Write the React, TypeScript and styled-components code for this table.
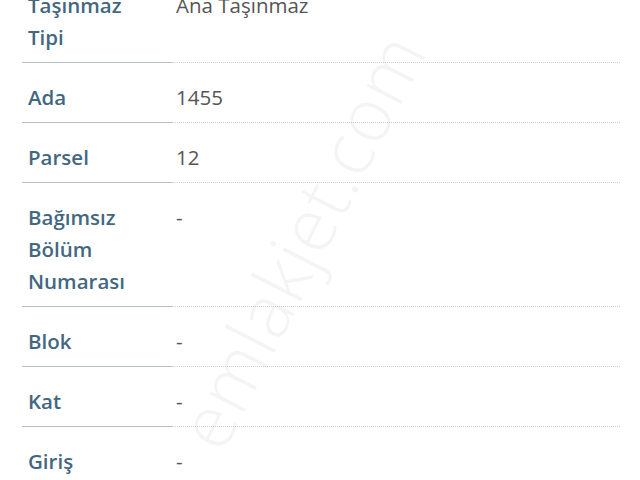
import React from "react";
import styled, { createGlobalStyle } from "styled-components";

const Global = createGlobalStyle`
  html, body { margin: 0; padding: 0; background: #fff; overflow: hidden; }
  body { font-family: "Open Sans", "Noto Sans", sans-serif; }
`;

const Page = styled.div`
  position: relative;
  width: 640px;
  height: 480px;
  overflow: hidden;
  background: #fff;
`;

const List = styled.div`
  display: grid;
  grid-template-columns: 150px 1fr;
  margin: -29px 20px 0 22px;
`;

const Label = styled.div<{ $last?: boolean }>`
  padding: 18px 20px 9px 6px;
  font-size: 20.5px;
  line-height: 32px;
  font-weight: 600;
  color: #43677f;
  border-bottom: 1px solid ${(p) => (p.$last ? "transparent" : "#b9c0c5")};
`;

const Value = styled.div<{ $last?: boolean }>`
  padding: 18px 0 9px 4px;
  font-size: 20.5px;
  line-height: 32px;
  font-weight: 400;
  color: #555;
  border-bottom: 1px dotted ${(p) => (p.$last ? "transparent" : "#cdd1d4")};
`;

const Watermark = styled.div`
  position: absolute;
  left: 300px;
  top: 240px;
  transform: translate(-50%, -50%) rotate(-63deg);
  font-size: 74px;
  font-weight: 300;
  color: rgba(0, 0, 0, 0.045);
  white-space: nowrap;
  pointer-events: none;
  letter-spacing: 1px;
`;

const rows: [string, string][] = [
  ["Taşınmaz Tipi", "Ana Taşınmaz"],
  ["Ada", "1455"],
  ["Parsel", "12"],
  ["Bağımsız Bölüm Numarası", "-"],
  ["Blok", "-"],
  ["Kat", "-"],
  ["Giriş", "-"],
];

export default function App() {
  return (
    <Page>
      <Global />
      <List>
        {rows.map(([l, v], i) => {
          const last = i === rows.length - 1;
          return (
            <React.Fragment key={l}>
              <Label $last={last}>{l}</Label>
              <Value $last={last}>{v}</Value>
            </React.Fragment>
          );
        })}
      </List>
      <Watermark>emlakjet.com</Watermark>
    </Page>
  );
}
